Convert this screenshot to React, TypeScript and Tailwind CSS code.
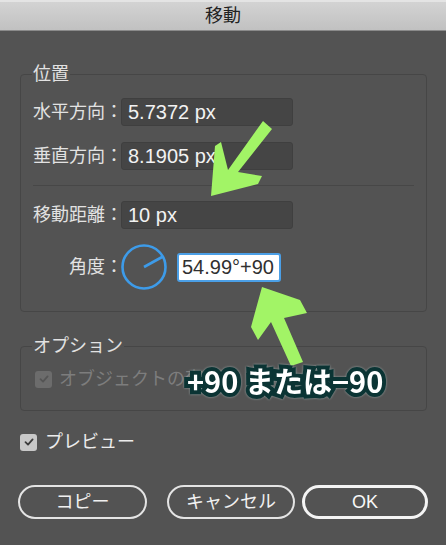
import React from "react";

const JP = "font-['Liberation_Sans','Noto_Sans_CJK_JP',sans-serif]";

function Check({ disabled }: { disabled?: boolean }) {
  return (
    <div
      className={
        "flex h-[17px] w-[17px] shrink-0 items-center justify-center rounded-[3px] " +
        (disabled ? "bg-[#6c6c6c]" : "bg-[#c8c8c8]")
      }
    >
      <svg width="12" height="12" viewBox="0 0 12 12">
        <path
          d="M2.5 6.2 L5 8.6 L9.6 3.4"
          fill="none"
          stroke={disabled ? "#555555" : "#3c3c3c"}
          strokeWidth="1.8"
          strokeLinecap="round"
          strokeLinejoin="round"
        />
      </svg>
    </div>
  );
}

function Row({ label, value }: { label: string; value: string }) {
  return (
    <div className="flex items-center">
      <div className="w-[88px] shrink-0 whitespace-nowrap text-[18px] leading-none text-[#e2e2e2]">{label}</div>
      <div className="relative flex h-[28px] w-[172px] items-center rounded-[3px] border border-[#3f3f3f] bg-[#454545] pl-[6px] text-[20px] text-[#f2f2f2]">
        {value}
      </div>
    </div>
  );
}

export default function App() {
  return (
    <div className={"relative h-[545px] w-[446px] overflow-hidden bg-[#535353] " + JP}>
      {/* title bar */}
      <div className="flex h-[31px] items-center justify-center border-b border-[#8a8a8a] border-t-2 border-t-[#e4e4e4] bg-[linear-gradient(#d3d3d3,#c1c1c1)] text-[18px] text-[#222222]">
        移動
      </div>

      <div className="px-[20px] pr-[19px] pt-[32px]">
        <fieldset className="rounded-[4px] border border-[#464646] px-[12px] pb-[21px] pt-[13px]">
          <legend className="-ml-[1px] px-[1px] text-[18px] leading-[22px] text-[#e2e2e2]">位置</legend>
          <div className="flex flex-col">
            <Row label="水平方向：" value="5.7372 px" />
            <div className="h-[16px]" />
            <Row label="垂直方向：" value="8.1905 px" />
            <div className="my-[15px] h-px bg-[#474747]" />
            <Row label="移動距離：" value="10 px" />
            <div className="mt-[15px] flex items-center">
              <div className="w-[88px] shrink-0 whitespace-nowrap pl-[36px] text-[18px] leading-none text-[#e2e2e2]">角度：</div>
              <svg width="46" height="46" viewBox="0 0 46 46" className="shrink-0">
                <circle cx="23" cy="23" r="21.5" fill="none" stroke="#3d9be9" strokeWidth="2.6" />
                <line x1="23" y1="23" x2="42" y2="12.5" stroke="#3d9be9" strokeWidth="2.6" />
              </svg>
              <div className="ml-[10px] flex h-[29px] w-[104px] items-center rounded-[3px] border-2 border-[#4b9fe6] bg-white pl-[3px] text-[20px] text-[#303030]">
                54.99°+90
              </div>
            </div>
          </div>
        </fieldset>

        <fieldset className="mt-[23px] rounded-[4px] border border-[#464646] px-[12px] pb-[22px] pt-[13px]">
          <legend className="-ml-[1px] px-[1px] text-[18px] leading-[22px] text-[#e2e2e2]">オプション</legend>
          <div className="flex items-center gap-[7px] pl-[2px]">
            <Check disabled />
            <span className="text-[18px] leading-none text-[#7d7d7d]">オブジェクトの変形</span>
          </div>
        </fieldset>

        <div className="mt-[22px] flex items-center gap-[8px]">
          <Check />
          <span className="text-[18px] leading-none text-[#ececec]">プレビュー</span>
        </div>
      </div>

      <div className="mt-[34px] flex px-[18px]">
        <button className="flex h-[34px] w-[129px] items-center justify-center rounded-full border-2 border-[#e4e4e4] text-[18px] text-[#f0f0f0]">
          コピー
        </button>
        <button className="ml-[20px] flex h-[34px] w-[128px] items-center justify-center rounded-full border-2 border-[#e4e4e4] text-[18px] text-[#f0f0f0]">
          キャンセル
        </button>
        <button className="ml-[7px] flex h-[34px] w-[126px] items-center justify-center rounded-full border-[3px] border-[#f4f4f4] text-[18px] text-[#f8f8f8]">
          OK
        </button>
      </div>

      {/* annotation arrows */}
      <svg className="pointer-events-none absolute left-0 top-0" width="446" height="545" viewBox="0 0 446 545">
        <polygon
          fill="#a2f466"
          points="263,121 272,129 238,172 262,176 258,184 211,196 215,146 221,142 228,170"
        />
        <polygon
          fill="#a2f466"
          points="262,287 300,300 307,313 284,318 303,362 291,366 271,322 258,340 251,327"
        />
      </svg>

      {/* annotation text */}
      <div className="absolute left-[187px] top-[362px] whitespace-nowrap font-['Noto_Sans_CJK_JP',sans-serif] text-[29px] font-bold leading-[37px] text-white [-webkit-text-stroke:8px_#0b3434] [paint-order:stroke_fill] [filter:drop-shadow(0_0_1px_rgba(200,220,220,0.6))]">
        +90 または−90
      </div>
    </div>
  );
}
